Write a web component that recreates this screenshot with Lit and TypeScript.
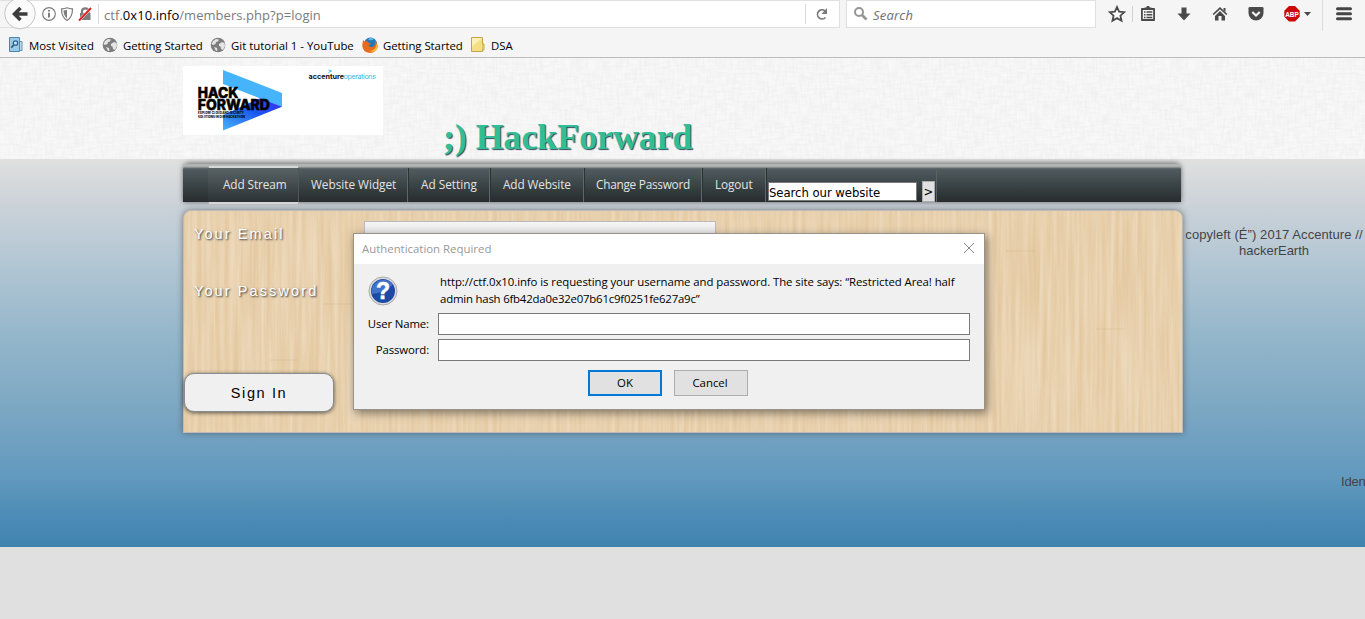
import { LitElement, html, css, svg } from "lit";
import { customElement } from "lit/decorators.js";

@customElement("browser-toolbar")
export class BrowserToolbar extends LitElement {
  static styles = css`
    :host { display: block; height: 57px; background: #f5f5f5; border-bottom: 1px solid #bdbdbd; font-family: "Open Sans", "Noto Sans", sans-serif; overflow: hidden; }
    svg { display: block; flex: none; }
    .row { display: flex; height: 28px; }
    .url { display: flex; align-items: center; box-sizing: border-box; flex: none; width: 840px; height: 28px; border: 1px solid #e0e0e0; border-left: 0; background: linear-gradient(90deg, #f5f5f5 20px, #fff 20px); }
    .back { margin: -4px 0 -3px 2px; }
    .ids { margin-left: 4px; }
    .sep { width: 1px; height: 20px; background: #d8d8d8; }
    .addr { margin-left: 5px; font-size: 13px; line-height: 26px; color: #7b7b7b; width: 701px; white-space: nowrap; padding-top: 1px; letter-spacing: 0.05px; }
    .addr b { font-weight: 400; color: #000; }
    .reload { margin-left: 8px; }
    .search { display: flex; align-items: center; box-sizing: border-box; flex: none; width: 250px; height: 28px; margin-left: 6px; border: 1px solid #e0e0e0; background: #fff; font-size: 13px; font-style: italic; color: #6e6e6e; }
    .search svg { margin: 0 4px 0 6px; }
    .search span { padding-top: 1px; letter-spacing: 0.2px; }
    .cell { display: flex; align-items: center; justify-content: center; flex: none; width: 36px; height: 28px; }
    .star { width: 30px; margin-left: 6px; border-right: 1px solid #d0d0d0; height: 16px; margin-top: 6px; }
    .list { width: 30px; }
    .load { margin-left: 3px; }
    .abp { width: 47px; gap: 4px; }
    .menu { width: 42px; margin-left: 1px; border-left: 1px solid #dcdcdc; height: 31px; align-items: flex-start; }
    .marks { display: flex; align-items: center; height: 20px; margin-top: 7px; padding-left: 8px; font-size: 11.4px; color: #000; }
    .mark { display: flex; align-items: center; gap: 5px; white-space: nowrap; box-sizing: border-box; }
    .m1 { width: 94px; }
    .m2 { width: 108px; letter-spacing: -.05px; }
    .m3 { width: 152px; }
    .m4 { width: 108px; letter-spacing: -.05px; }
  `;
  globe() {
    return svg`<svg width="16" height="16" viewBox="0 0 16 16"><circle cx="8" cy="8" r="7.300" fill="#7d7d7d"/><path d="M3 4l3-2 3 .5-1 2-2 .5-.5 2L3 8 1.500 7zM9 7l3-2 2.500 1 .5 3-2 4-2-1-.5-2.500L9 9zM4 10l3 1 .5 2.500L6 14z" fill="#e4e4e4"/></svg>`;
  }
  render() {
    return html`
      <div class="row">
        <div class="url">
          <svg class="back" width="36" height="33" viewBox="0 0 36 33"><circle cx="18" cy="16.500" r="15.300" fill="#fafafa" stroke="#c4c4c4"/><path d="M12.500 17h13M18.500 11l-6 6 6 6" fill="none" stroke="#3c3c3c" stroke-width="3.500"/></svg>
          <svg class="ids" width="56" height="20" viewBox="0 0 56 20">
            <g transform="translate(-1 0)"><circle cx="8" cy="10" r="6.300" fill="none" stroke="#7d7d7d" stroke-width="1.200"/><path d="M7 6h2v1.500H7zM7 8.700h2v4.800H7z" fill="#7d7d7d"/></g>
            <path d="M25 3.800q3 1.200 5.500 1 0 8.500-5.500 11.700-5.500-3.200-5.500-11.700 2.500.2 5.500-1z" fill="#fff" stroke="#7d7d7d" stroke-width="1.200"/><path d="M25 5.700q-2 .7-3.600.7.3 5 3.600 8z" fill="#7d7d7d"/>
            <path d="M38 9h10.500v7H38z" fill="#7d7d7d"/><path d="M40 9V7q0-2.700 3.200-2.700T46.500 7v2" fill="none" stroke="#7d7d7d" stroke-width="2.200"/><path d="M37 16.500L49 4" stroke="#fff" stroke-width="2.600"/><path d="M37 16.500L49 4" stroke="#e02020" stroke-width="1.900"/>
          </svg>
          <div class="sep"></div>
          <div class="addr">ctf.<b>0x10.info</b>/members.php?p=login</div>
          <div class="sep"></div>
          <svg class="reload" width="16" height="16" viewBox="0 0 16 16"><path d="M11.500 11.500A4.600 4.600 0 1 1 11 4.800" fill="none" stroke="#7a7a7a" stroke-width="1.700"/><path d="M13 2v6H7.500z" fill="#7a7a7a"/></svg>
        </div>
        <div class="search"><svg width="16" height="16" viewBox="0 0 16 16"><circle cx="6" cy="6" r="4" fill="none" stroke="#969696" stroke-width="2"/><path d="M9 9l4.500 4.500" stroke="#969696" stroke-width="2.700"/></svg><span>Search</span></div>
        <div class="cell star"><svg width="18" height="18" viewBox="0 0 18 18"><path d="M9 2l2.100 4.700 5.100.5-3.800 3.500 1.100 5L9 13.100l-4.500 2.600 1.100-5L1.800 7.200l5.100-.5z" fill="#fff" stroke="#4a4a4a" stroke-width="1.800"/></svg></div>
        <div class="cell list"><svg width="16" height="18" viewBox="0 0 16 18"><path d="M1.900 4h12.200v11H1.900z" fill="none" stroke="#4a4a4a" stroke-width="1.800" stroke-linejoin="round"/><path d="M4.500 4V2.500h1.700L7 1h2l.8 1.500h1.700V4z" fill="#4a4a4a"/><path d="M4 7h1.500M4 9.700h1.500M4 12.400h1.500M6.500 7h5.800M6.500 9.700h5.800M6.500 12.400h5.800" stroke="#4a4a4a" stroke-width="1.500"/></svg></div>
        <div class="cell load"><svg width="16" height="18" viewBox="0 0 16 18"><path d="M5.500 2.500h5v6h4L8 15.500 1.500 8.500h4z" fill="#4a4a4a"/></svg></div>
        <div class="cell"><svg width="16" height="18" viewBox="0 0 16 18"><path d="M1.200 9.500L8 3.200l6.800 6.300" fill="none" stroke="#4a4a4a" stroke-width="1.700"/><path d="M11.500 3h2v4l-2-2zM8 6l5 5v4.500H9.500V11h-3v4.500H3V11z" fill="#4a4a4a"/></svg></div>
        <div class="cell"><svg width="16" height="18" viewBox="0 0 16 18"><path d="M1.800 2h12.400q1.300 0 1.300 1.300V8a7.500 7.500 0 0 1-15 0V3.300Q.5 2 1.800 2z" fill="#4a4a4a"/><path d="M4.300 7L8 10.500 11.700 7" fill="none" stroke="#f8f8f8" stroke-width="2"/></svg></div>
        <div class="cell abp"><svg width="16" height="18" viewBox="0 0 16 18"><path d="M5 1h6l4.700 4.700v6L11 16.500H5L.3 11.700v-6z" fill="#cc0808"/><text x="8" y="11.500" text-anchor="middle" font-family="Liberation Sans" font-size="7" font-weight="700" fill="#fff" textLength="13.500" lengthAdjust="spacingAndGlyphs">ABP</text></svg><svg width="7" height="4" viewBox="0 0 7 4"><path d="M0 0h7L3.500 4z" fill="#4a4a4a"/></svg></div>
        <div class="cell menu"><svg width="16" height="28" viewBox="0 0 16 28"><path d="M1.500 8.700h13M1.500 13.700h13M1.500 18.700h13" stroke="#454545" stroke-width="3" stroke-linecap="round"/></svg></div>
      </div>
      <div class="marks">
        <div class="mark m1"><svg width="16" height="16" viewBox="0 0 16 16"><path d="M1.500 .5h10v14h-10z" fill="#9cc9e6" stroke="#4a86b0"/><path d="M12 4.500h2v9h-2" fill="#b9dcf0" stroke="#5c95bb"/><circle cx="7.500" cy="6" r="2.200" fill="#cfe7f5" stroke="#24618f" stroke-width="1.300"/><path d="M5.700 8L3.300 10.700" stroke="#24618f" stroke-width="1.800"/></svg>Most Visited</div>
        <div class="mark m2">${this.globe()}Getting Started</div>
        <div class="mark m3">${this.globe()}Git tutorial 1 - YouTube</div>
        <div class="mark m4"><svg width="16" height="16" viewBox="0 0 16 16"><circle cx="8.500" cy="7" r="6.500" fill="#2277b8"/><path d="M6 2.500q3-2.500 6-.5l-3 1.500z" fill="#5fbde8"/><path d="M1 3l1.500 1.500L5 4l1 1.500 3 1-2.500 2q2 2.500 5 1 2.500-2 1.500-6Q16.500 7 15.500 11 13 16 8 16 0 15 .3 8z" fill="#e86a1c"/><path d="M13.500 4q1.800 4-.5 7.500-3 3.500-7 2 8 3.500 9.600-3z" fill="#f9bd3a"/></svg>Getting Started</div>
        <div class="mark"><svg width="16" height="16" viewBox="0 0 16 16"><path d="M1.500 .5h11v14h-11z" fill="#f4df87" stroke="#c3a546"/><path d="M12.500 7h1.500v6h-1.500" fill="#f4df87" stroke="#c3a546"/><path d="M2 1h10L2 9.500z" fill="#fbf0b8"/></svg>DSA</div>
      </div>`;
  }
}

@customElement("auth-dialog")
export class AuthDialog extends LitElement {
  static styles = css`
    :host { display: block; box-sizing: border-box; width: 632px; height: 177px; border: 1px solid #97938c; background: #f0f0f0; box-shadow: 2px 3px 9px rgba(0,0,0,.45); font: 11.4px/17px "Open Sans", "Noto Sans", sans-serif; color: #000; }
    .bar { display: flex; justify-content: space-between; align-items: center; height: 30px; background: #fff; padding: 0 9px 0 8px; color: #999; }
    .bar span { margin-top: -2px; }
    .bar svg { margin-bottom: 2px; }
    .msg { display: grid; grid-template-columns: 28px 1fr; column-gap: 44px; padding: 9px 20px 0 14px; height: 40px; white-space: nowrap; }
    .msg svg { margin-top: 3px; }
    .l1 { letter-spacing: -0.07px; }
    .l2 { letter-spacing: -0.2px; }
    .fields { display: grid; grid-template-columns: 75px 532px; column-gap: 9px; row-gap: 4px; align-items: center; }
    .fields label { text-align: right; white-space: nowrap; letter-spacing: -0.13px; margin-top: -1px; }
    .fields input { box-sizing: border-box; width: 532px; height: 22px; border: 1px solid #7a7a7a; background: #fff; padding: 0; margin: 0; display: block; }
    .btns { display: flex; justify-content: center; gap: 12px; padding-top: 9px; padding-right: 2px; }
    .btns button { box-sizing: border-box; width: 74px; height: 26px; border: 1px solid #adadad; background: #e1e1e1; font: inherit; padding: 0 2px 2px 0; border-radius: 0; color: #000; }
    .btns .ok { border: 2px solid #0078d7; padding: 0 0 2px; }
  `;
  render() {
    return html`
      <div class="bar"><span>Authentication Required</span><svg width="12" height="12" viewBox="0 0 12 12"><path d="M1 1l10 10M11 1L1 11" stroke="#8a8a8a"/></svg></div>
      <div class="msg">
        <svg width="30" height="30" viewBox="0 0 30 30"><circle cx="15" cy="15" r="14" fill="#dcdcdc" stroke="#a9a9a9"/><circle cx="15" cy="15" r="12" fill="#1c49a4"/><path d="M3.500 17A12 12 0 0 1 25 8.500Q17 17 3.500 18z" fill="#4273cb"/><text x="15" y="23" text-anchor="middle" font-family="Liberation Sans" font-size="23" font-weight="700" fill="#fff" stroke="#fff" stroke-width=".5">?</text></svg>
        <div><div class="l1">http://ctf.0x10.info is requesting your username and password. The site says: “Restricted Area! half</div><div class="l2">admin hash 6fb42da0e32e07b61c9f0251fe627a9c”</div></div>
      </div>
      <div class="fields"><label>User Name:</label><input /><label>Password:</label><input type="password" /></div>
      <div class="btns"><button class="ok">OK</button><button>Cancel</button></div>`;
  }
}

@customElement("app-root")
export class AppRoot extends LitElement {
  static styles = css`
    :host { display: block; position: relative; width: 1365px; height: 619px; overflow: hidden; background: #e0e0e0; font-family: "Liberation Sans", Arial, sans-serif; }
    .head { display: flex; align-items: flex-start; box-sizing: border-box; height: 101px; padding: 8px 0 0 183px; background-color: #f8f8f8; background-image: url("data:image/svg+xml,%3Csvg xmlns='http://www.w3.org/2000/svg' width='300' height='101'%3E%3Cfilter id='a' x='0' y='0' width='100%25' height='100%25'%3E%3CfeTurbulence type='fractalNoise' baseFrequency='.07 .4' numOctaves='2' stitchTiles='stitch'/%3E%3CfeColorMatrix values='0 0 0 0 .86 0 0 0 0 .86 0 0 0 0 .86 1.6 0 0 0 -.62'/%3E%3C/filter%3E%3Cfilter id='b' x='0' y='0' width='100%25' height='100%25'%3E%3CfeTurbulence type='fractalNoise' baseFrequency='.4 .07' numOctaves='2' seed='7' stitchTiles='stitch'/%3E%3CfeColorMatrix values='0 0 0 0 .86 0 0 0 0 .86 0 0 0 0 .86 1.6 0 0 0 -.62'/%3E%3C/filter%3E%3Crect width='300' height='101' filter='url(%23a)'/%3E%3Crect width='300' height='101' filter='url(%23b)'/%3E%3C/svg%3E"); }
    .logo { display: block; background: #fff; }
    .title { margin: 49px 0 0 60px; font: 700 36px/44px "Liberation Serif", "Times New Roman", serif; letter-spacing: -0.1px; color: #33bd94; text-shadow: 1px 1px 1px #34495e; white-space: nowrap; }
    .sky { display: grid; grid-template-columns: 1000px 182px; align-content: start; box-sizing: border-box; height: 388px; padding: 4px 0 0 183px; background: linear-gradient(#e0e0df 0, #ccd3d9 44px, #b0c5d3 110px, #93b6ca 180px, #7ca7c3 250px, #6299bf 318px, #5390b7 345px, #4b8bb7 360px, #4084ae 388px); }
    .nav { display: flex; box-sizing: border-box; width: 998px; height: 39px; padding: 5px 0 0 25px; border-radius: 6px 6px 0 0; background: linear-gradient(#949696, #b9baba 2px, #a4a6a6 4px, #6c7274 5px, #525c60 6px, #3b4446 55%, #272c2e); box-shadow: 0 0 5px rgba(60,60,60,.75); }
    .tab { box-sizing: border-box; flex: none; height: 34px; line-height: 33px; padding-left: 12px; color: #e3e5e5; font-family: "Open Sans", "Noto Sans", sans-serif; font-size: 11.800px; border-right: 1px solid #5e676a; box-shadow: 1px 0 #2b3235; white-space: nowrap; }
    .t1 { width: 91px; padding-left: 15px; background: linear-gradient(#596366, #2c3234); border-right-color: #4c5558; box-shadow: 0 3px 1px -1px #d5d6d6, 0 -3px 1px -1px #d5d6d6; letter-spacing: -.1px; }
    .t2 { width: 109px; letter-spacing: -.02px; } .t3 { width: 82px; padding-left: 13px; } .t4 { width: 94px; padding-left: 13px; letter-spacing: -.12px; } .t5 { width: 118px; letter-spacing: -.25px; } .t6 { width: 64px; padding-left: 13px; letter-spacing: -.1px; }
    .find { display: flex; align-items: flex-end; box-sizing: border-box; width: 171px; height: 34px; padding: 0 0 0 2px; border-right: 1px solid #596366; }
    .find input { box-sizing: border-box; width: 149px; height: 19px; margin: 0 5px 1px 0; padding: 1px 0 0; border: 1px solid #7a7a7a; font: 13px "DejaVu Sans Condensed", "DejaVu Sans", sans-serif; letter-spacing: -.06px; color: #000; background: #fff; }
    .find button { box-sizing: border-box; width: 13px; height: 21px; padding: 0; border: 1px solid #adadad; background: #e1e1e1; font: 13px "DejaVu Sans Condensed", "DejaVu Sans", sans-serif; }
    .panel { display: grid; grid-template-columns: 180px 352px; align-items: start; grid-template-rows: 57px 95px 40px; box-sizing: border-box; width: 1000px; height: 223px; margin-top: 8px; padding-top: 10px; border: 1px solid #bbb; border-radius: 8px 8px 0 0; box-shadow: 0 0 6px rgba(80,80,80,.7); background-color: #eddabd; background-image: url("data:image/svg+xml,%3Csvg xmlns='http://www.w3.org/2000/svg' width='500' height='223'%3E%3Cfilter id='a' x='0' y='0' width='100%25' height='100%25' color-interpolation-filters='sRGB'%3E%3CfeTurbulence type='fractalNoise' baseFrequency='.22 .01' numOctaves='3' seed='4' stitchTiles='stitch'/%3E%3CfeColorMatrix values='0 0 0 0 .89 0 0 0 0 .78 0 0 0 0 .62 1.5 0 0 0 -.25'/%3E%3C/filter%3E%3Crect width='500' height='223' filter='url(%23a)'/%3E%3Cg fill='none' stroke='%23cfae80' stroke-opacity='.3'%3E%3Cpath d='M86 149h28M140 93h28M240 162h28M322 40h28M412 118h28'/%3E%3C/g%3E%3C/svg%3E"); }
    .lab { padding: 4px 0 0 10px; font-size: 14.500px; line-height: 18px; letter-spacing: 2.100px; color: #fff; text-shadow: 1px 1px 2px #333; white-space: nowrap; }
    .field { box-sizing: border-box; width: 352px; height: 40px; border: 1px solid #bbb; background: linear-gradient(#f5f5f5, #c8c8c8); padding: 0; }
    .sign { box-sizing: border-box; width: 150px; height: 39px; border: 1px solid #888c90; border-radius: 10px; background: #f0f0f0; box-shadow: 0 1px 4px rgba(0,0,0,.6); font: 14.500px "Liberation Sans", Arial, sans-serif; letter-spacing: 1.600px; color: #000; padding: 0; }
    .side { display: flex; flex-direction: column; padding-top: 64px; font-size: 13px; line-height: 16px; color: #444; text-align: center; white-space: nowrap; }
    .copy { letter-spacing: .08px; }
    .iden { align-self: flex-end; margin-top: 215px; width: 24px; text-align: left; letter-spacing: -.15px; }
    .pop { position: absolute; left: 353px; top: 233px; }
  `;
  render() {
    return html`
      <browser-toolbar></browser-toolbar>
      <div class="head">
        <svg class="logo" width="200" height="69" viewBox="0 0 200 69">
          <defs><linearGradient id="g" x1="0" y1="1" x2="1" y2="0"><stop offset="0" stop-color="#46b4fb"/><stop offset=".55" stop-color="#1b57f0"/><stop offset="1" stop-color="#3c2cf0"/></linearGradient></defs>
          <path d="M40 4l59 23v14L40 18z" fill="#46b4fa"/><path d="M40 64.500l59-23.700-22-8.500L40 49z" fill="url(#g)"/>
          <text font-family="Inter, Liberation Sans" font-weight="800" font-size="14" stroke="#000" stroke-width=".5" fill="#000"><tspan x="14.800" y="32" textLength="40.500" lengthAdjust="spacingAndGlyphs">HACK</tspan><tspan x="14.800" y="44" textLength="72" lengthAdjust="spacingAndGlyphs">FORWARD</tspan></text>
          <text transform="translate(15 48.200) scale(.26 .25)" font-family="Inter, Liberation Sans" font-weight="800" font-size="11" fill="#000"><tspan x="0" y="0" textLength="177">EXPLORE CLOUD AND SECURITY</tspan><tspan x="0" y="15" textLength="181">SOLUTIONS IN OUR HACKATHON</tspan></text>
          <text font-family="Inter, Liberation Sans" font-size="7.200" y="12.600"><tspan x="125.500" font-weight="700" fill="#111">accenture</tspan><tspan x="160.500" fill="#3bb8ea" textLength="32.500">operations</tspan></text><path d="M145.500 4l3 1-3 1.500" fill="none" stroke="#3bb8ea"/>
        </svg>
        <div class="title">;) HackForward</div>
      </div>
      <div class="sky">
        <div>
          <div class="nav">
            <div class="tab t1">Add Stream</div><div class="tab t2">Website Widget</div><div class="tab t3">Ad Setting</div><div class="tab t4">Add Website</div><div class="tab t5">Change Password</div><div class="tab t6">Logout</div>
            <div class="find"><input value="Search our website" /><button>&gt;</button></div>
          </div>
          <div class="panel">
            <div class="lab">Your Email</div><input class="field" />
            <div class="lab">Your Password</div><span></span>
            <button class="sign">Sign In</button>
          </div>
        </div>
        <div class="side"><span class="copy">copyleft (É”) 2017 Accenture //</span><span>hackerEarth</span><span class="iden">Iden</span></div>
      </div>
      <auth-dialog class="pop"></auth-dialog>`;
  }
}
